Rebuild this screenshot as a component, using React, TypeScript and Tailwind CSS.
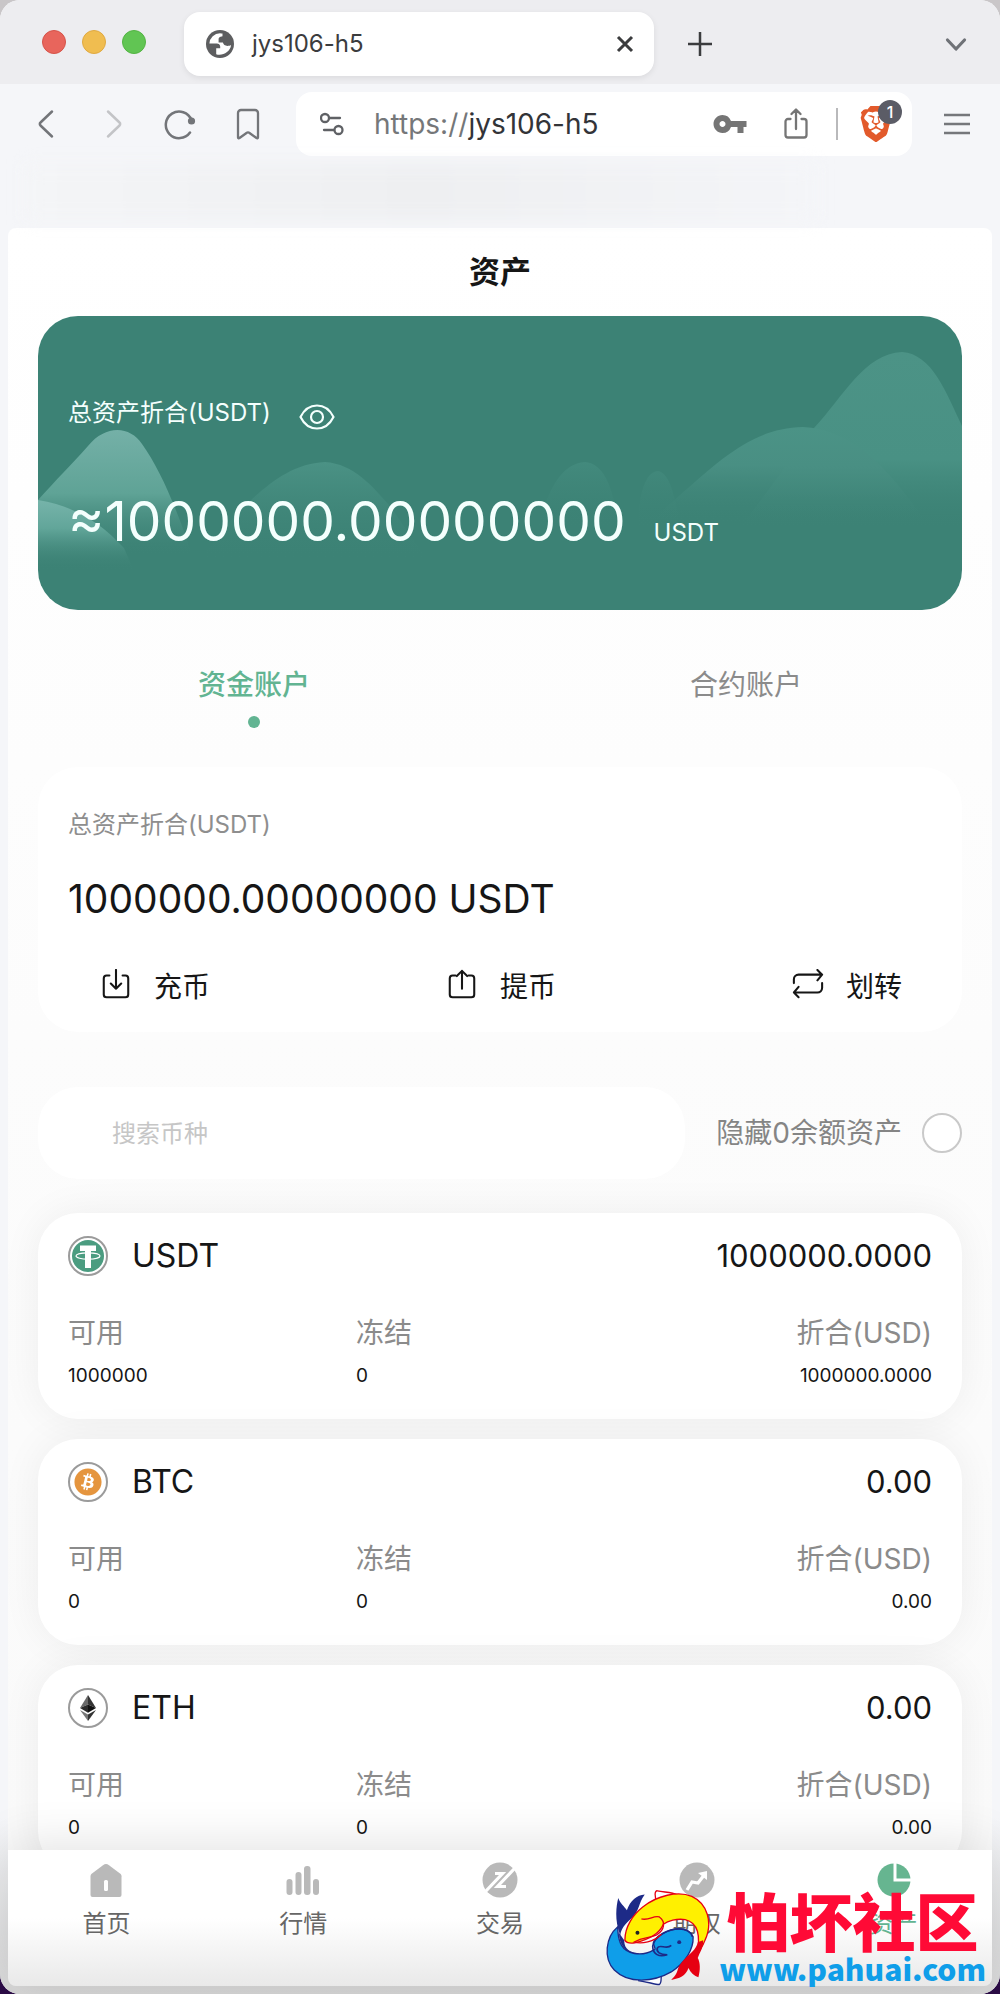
import React, { useState } from "react";
import { SiBrave } from "react-icons/si";
import { FaBitcoin } from "react-icons/fa6";
import { MdVpnKey } from "react-icons/md";

const assets = [
  { symbol: "USDT", total: "1000000.0000", available: "1000000", frozen: "0", usd: "1000000.0000" },
  { symbol: "BTC", total: "0.00", available: "0", frozen: "0", usd: "0.00" },
  { symbol: "ETH", total: "0.00", available: "0", frozen: "0", usd: "0.00" },
];

function GlobeIcon() {
  return (
    <svg viewBox="0 0 28 28" className="size-7 shrink-0">
      <circle cx="14" cy="14" r="14" fill="#5d5e60" />
      <path
        d="M14 3.2A10.9 10.9 0 0 0 3.4 13.4h7.4c1.8 0 3.4 1.2 3.4 3.2v1.6h-4v6c5.900 2 14-2 14.900-9.200-1.300.6-2.200.9-3.600.9-2.600 0-4.200-1.300-4.600-3.300h-4.300V9.200c0-1.300.8-2.200 2-2.500l1.900-.5V3.600A11 11 0 0 0 14 3.200Z"
        fill="#fff"
      />
    </svg>
  );
}

function CoinIcon({ symbol }: { symbol: string }) {
  return (
    <span className="flex size-10 shrink-0 items-center justify-center rounded-full border-2 border-[#9b9b9b] bg-white">
      {symbol === "USDT" && (
        <svg viewBox="0 0 32 32" className="size-8">
          <circle cx="16" cy="16" r="16" fill="#4b9c80" />
          <path d="M8 5.500h16v5.500h-5V28h-6V11H8z" fill="#fff" />
          <ellipse cx="16" cy="16" rx="12" ry="3.200" fill="none" stroke="#fff" strokeWidth="1.200" />
        </svg>
      )}
      {symbol === "BTC" && <FaBitcoin className="size-7 text-[#e5953e]" />}
      {symbol === "ETH" && (
        <svg viewBox="0 0 16 26" className="h-[26px] w-4">
          <path d="M8 0 0 13l8-3.600z" fill="#6a6a6a" />
          <path d="M8 0l8 13-8-3.600z" fill="#333" />
          <path d="M0 13l8-3.600V17.700z" fill="#2b2b2b" />
          <path d="M16 13 8 9.400v8.300z" fill="#111" />
          <path d="M0 15l8 4.600V26z" fill="#777" />
          <path d="M16 15l-8 4.600V26z" fill="#333" />
        </svg>
      )}
    </span>
  );
}

function Mountains() {
  return (
    <svg viewBox="0 0 924 294" preserveAspectRatio="none" className="absolute inset-0 size-full">
      <defs>
        <linearGradient id="peakBright" gradientUnits="userSpaceOnUse" x1="0" y1="115" x2="0" y2="240">
          <stop offset="0" stopColor="#74b0a7" />
          <stop offset="0.500" stopColor="#5fa396" />
          <stop offset="1" stopColor="#3c8275" stopOpacity="0" />
        </linearGradient>
        <linearGradient id="hillBright" gradientUnits="userSpaceOnUse" x1="0" y1="184" x2="0" y2="254">
          <stop offset="0" stopColor="#76b4aa" />
          <stop offset="0.400" stopColor="#62a69a" />
          <stop offset="1" stopColor="#3c8275" stopOpacity="0" />
        </linearGradient>
        <linearGradient id="midHill" gradientUnits="userSpaceOnUse" x1="0" y1="146" x2="0" y2="245">
          <stop offset="0" stopColor="#4b9285" />
          <stop offset="1" stopColor="#3c8275" stopOpacity="0" />
        </linearGradient>
        <linearGradient id="faintHill" gradientUnits="userSpaceOnUse" x1="0" y1="146" x2="0" y2="215">
          <stop offset="0" stopColor="#438a7d" />
          <stop offset="1" stopColor="#3c8275" stopOpacity="0" />
        </linearGradient>
        <linearGradient id="farPeak" gradientUnits="userSpaceOnUse" x1="0" y1="36" x2="0" y2="215">
          <stop offset="0" stopColor="#4c9386" />
          <stop offset="0.600" stopColor="#499184" />
          <stop offset="1" stopColor="#3c8275" stopOpacity="0" />
        </linearGradient>
        <linearGradient id="nearPeak" gradientUnits="userSpaceOnUse" x1="0" y1="111" x2="0" y2="208">
          <stop offset="0" stopColor="#4b9386" />
          <stop offset="0.400" stopColor="#498f83" />
          <stop offset="1" stopColor="#3c8275" stopOpacity="0" />
        </linearGradient>
      </defs>
      <path d="M0 184C18 164 34 148 50 130C68 108 92 110 104 128C124 156 140 196 158 250H0Z" fill="url(#peakBright)" />
      <path d="M0 184C36 190 62 206 86 232L100 264H0Z" fill="url(#hillBright)" />
      <path d="M200 196C226 172 250 148 287 146C316 148 334 170 352 190L390 245H160Z" fill="url(#midHill)" />
      <path d="M498 215C508 185 518 148 547 146C572 148 577 188 582 215Z" fill="url(#faintHill)" />
      <path d="M600 215C600 182 606 156 620 155C634 158 637 186 644 215Z" fill="url(#faintHill)" />
      <path d="M700 215L776 112C806 80 826 38 864 36C894 38 908 76 924 110V215Z" fill="url(#farPeak)" />
      <path d="M610 208L642 179C684 142 716 112 765 111C816 114 848 150 890 208Z" fill="url(#nearPeak)" />
    </svg>
  );
}

function FishLogo() {
  return (
    <svg viewBox="20 105 320 295" className="h-[98px] w-[106px] shrink-0">
      <path d="M178 150C168 130 170 112 178 113C200 118 220 116 240 126" fill="none" stroke="#e60012" strokeWidth="4" />
      <path d="M120 384C150 388 170 396 184 396C194 388 186 374 192 355" fill="#fff" stroke="#1d2a87" strokeWidth="4" />
      <path
        d="M58 222C22 252 14 318 48 352C92 396 168 388 220 358C262 330 288 290 286 252C280 236 262 228 244 228C212 228 176 248 166 270C168 282 176 292 166 292C128 314 84 302 70 278C58 258 60 240 58 222Z"
        fill="#0f9ee9"
        stroke="#1d2a87"
        strokeWidth="4"
      />
      <path
        d="M284 252C280 236 262 228 244 228C212 228 170 248 164 280C164 306 184 314 208 306C186 306 174 298 178 286C184 272 206 292 220 278"
        fill="none"
        stroke="#1d2a87"
        strokeWidth="5"
      />
      <path d="M66 248C48 200 54 160 60 135C66 152 78 160 86 172C96 142 116 126 140 124C120 150 126 172 100 196C82 212 68 228 66 248Z" fill="#1d2a87" />
      <path d="M62 240C62 280 88 308 126 302C96 300 78 290 78 262Z" fill="#1d2a87" />
      <path
        d="M80 262C80 220 106 184 134 162C176 128 240 112 282 130C330 152 346 210 322 262C316 280 306 292 300 302C306 250 304 210 262 200C236 196 210 204 196 214C184 244 144 262 110 270C96 272 84 270 80 262Z"
        fill="#fff000"
        stroke="#e60012"
        strokeWidth="4"
      />
      <path
        d="M130 198C154 204 166 186 184 192C204 206 200 232 176 246C152 258 136 250 108 268C130 274 168 268 190 244"
        fill="none"
        stroke="#e60012"
        strokeWidth="4"
      />
      <path d="M300 268C294 300 250 316 240 350C236 366 228 374 220 382C244 378 264 370 272 346C278 360 290 370 302 374C308 352 308 330 300 316C306 298 318 284 316 262Z" fill="#e60012" />
      <circle cx="118" cy="240" r="6" fill="#222" />
      <circle cx="244" cy="268" r="6" fill="#1d2a87" />
    </svg>
  );
}

const actions = [
  {
    label: "充币",
    icon: (
      <>
        <path d="M9 6H6a3 3 0 0 0-3 3v17a3 3 0 0 0 3 3h20a3 3 0 0 0 3-3V9a3 3 0 0 0-3-3h-3" />
        <path d="M16 0v20M10.500 14.500 16 20l5.500-5.500" />
      </>
    ),
  },
  {
    label: "提币",
    icon: (
      <>
        <path d="M9 6H6a3 3 0 0 0-3 3v17a3 3 0 0 0 3 3h20a3 3 0 0 0 3-3V9a3 3 0 0 0-3-3h-3" />
        <path d="M16 20V1M10.500 6.500 16 1l5.500 5.500" />
      </>
    ),
  },
  {
    label: "划转",
    icon: (
      <>
        <path d="M1 14V10a5 5 0 0 1 5-5h25M26 0l5 5-5 6" />
        <path d="M31 14v5a5 5 0 0 1-5 5H1M6 18l-5 6 5 5" />
      </>
    ),
  },
];

const navItems = [
  {
    label: "首页",
    icon: (
      <>
        <path d="M18 2c1 0 2 .5 3 1.200l11 8.300c1 .8 1.500 1.700 1.500 2.800V33a2 2 0 0 1-2 2h-27a2 2 0 0 1-2-2V14.300c0-1.100.5-2 1.500-2.800L15 3.200C16 2.500 17 2 18 2Z" />
        <rect x="16" y="18" width="4" height="11" rx="1.500" fill="#fff" />
      </>
    ),
  },
  {
    label: "行情",
    icon: (
      <>
        <rect x="1.500" y="17" width="6" height="16" rx="3" />
        <rect x="10.500" y="10" width="6" height="23" rx="3" />
        <rect x="19" y="4" width="6.500" height="29" rx="3" />
        <rect x="28" y="17" width="6" height="16" rx="3" />
      </>
    ),
  },
  {
    label: "交易",
    icon: (
      <>
        <circle cx="18" cy="18" r="17.500" />
        <path d="M3 30 20.500 11.500H13M33 6 15.500 24.500H24" fill="none" stroke="#fff" strokeWidth="3.200" />
      </>
    ),
  },
  {
    label: "期权",
    icon: (
      <>
        <circle cx="18" cy="18" r="17.500" />
        <path d="m8 28 5-8 6 1 7-9" fill="none" stroke="#fff" strokeWidth="3.200" />
        <path d="m19 11 9-2v9z" fill="#fff" />
      </>
    ),
  },
  {
    label: "资产",
    icon: (
      <>
        <circle cx="18" cy="18" r="16.500" />
        <path d="M19 0v18h17" fill="none" stroke="#fff" strokeWidth="3" />
      </>
    ),
  },
];

function BrowserChrome() {
  const [open, setOpen] = useState(true);
  return (
    <header className="shrink-0">
      <div className="flex h-[84px] items-center bg-[#ededf0] pt-1 pr-8 pl-[42px]">
        <div className="flex gap-4 pb-1">
          <span className="size-6 rounded-full border border-[#d65349] bg-[#e8655c]" />
          <span className="size-6 rounded-full border border-[#e0a941] bg-[#f0bd50]" />
          <span className="size-6 rounded-full border border-[#53b443] bg-[#61c553]" />
        </div>
        <div className="ml-[38px] flex h-16 w-[470px] items-center rounded-2xl bg-white pr-5 pl-[22px] shadow-[0_2px_6px_rgba(0,0,0,0.08)]">
          <GlobeIcon />
          <span className="ml-[18px] flex-1 text-2xl text-[#3b3c3e]">jys106-h5</span>
          <button aria-label="Close tab" onClick={() => setOpen(!open)}>
            <svg viewBox="0 0 18 18" className="size-[18px]" stroke="#3b3c3e" strokeWidth="3" fill="none">
              <path d="m2 2 14 14M16 2 2 16" />
            </svg>
          </button>
        </div>
        <button aria-label="New tab" className="ml-[34px]">
          <svg viewBox="0 0 24 24" className="size-6" stroke="#3b3c3e" strokeWidth="2.500" fill="none">
            <path d="M12 0v24M0 12h24" />
          </svg>
        </button>
        <button aria-label="Search tabs" className="ml-auto">
          <svg viewBox="0 0 24 24" className="size-6" stroke="#6f7277" strokeWidth="3.200" fill="none" strokeLinecap="round" strokeLinejoin="round">
            <path d="m3.500 8 8.500 9 8.500-9" />
          </svg>
        </button>
      </div>
      <div className="flex h-20 items-center pr-[30px] pl-8">
        <div className="flex items-center gap-[38px] text-[#737579]">
          <button aria-label="Back">
            <svg viewBox="0 0 28 32" className="h-8 w-7" stroke="currentColor" strokeWidth="2.500" fill="none" strokeLinecap="round" strokeLinejoin="round">
              <path d="M20 3.500 8.500 14.500a2 2 0 0 0 0 3L20 28.500" />
            </svg>
          </button>
          <button aria-label="Forward" className="text-[#c3c4c7]">
            <svg viewBox="0 0 28 32" className="h-8 w-7" stroke="currentColor" strokeWidth="2.500" fill="none" strokeLinecap="round" strokeLinejoin="round">
              <path d="m10 3.500 11.500 11a2 2 0 0 1 0 3L10 28.500" />
            </svg>
          </button>
          <button aria-label="Reload">
            <svg viewBox="0 0 32 32" className="size-8" stroke="currentColor" strokeWidth="2.500" fill="none" strokeLinecap="round">
              <path d="M26 24.500A13.300 13.300 0 1 1 27.500 12" />
              <circle cx="27.500" cy="13" r="3.600" fill="currentColor" stroke="none" />
            </svg>
          </button>
          <button aria-label="Bookmark">
            <svg viewBox="0 0 28 32" className="h-8 w-7" stroke="currentColor" strokeWidth="2.300" fill="none" strokeLinejoin="round">
              <path d="M4 5a3 3 0 0 1 3-3h14a3 3 0 0 1 3 3v24.500c0 1-1 1-1.500.5L15.500 25a2 2 0 0 0-3 0L5.500 30c-.5.500-1.500.5-1.500-.5Z" />
            </svg>
          </button>
        </div>
        <div className="ml-[34px] flex h-16 flex-1 items-center rounded-2xl bg-white pr-[18px] pl-6">
          <svg viewBox="0 0 24 24" className="size-6" stroke="#5f6165" strokeWidth="2.300" fill="none" strokeLinecap="round">
            <circle cx="5" cy="6" r="4" />
            <path d="M9.500 6H20M4 18h10" />
            <circle cx="18.500" cy="18" r="4" />
          </svg>
          <span className="ml-[30px] flex-1 text-[28px] text-[#333438]">
            <span className="text-[#757779]">https://</span>jys106-h5
          </span>
          <button aria-label="Passwords">
            <MdVpnKey className="size-9 text-[#757575]" />
          </button>
          <button aria-label="Share" className="ml-9">
            <svg viewBox="0 0 24 32" className="h-8 w-6" stroke="#757575" strokeWidth="2.300" fill="none" strokeLinecap="round" strokeLinejoin="round">
              <path d="M6.500 11H4a2.500 2.500 0 0 0-2.500 2.500V27A2.500 2.500 0 0 0 4 29.500h16a2.500 2.500 0 0 0 2.500-2.500V13.500A2.500 2.500 0 0 0 20 11h-2.500M12 21V2M7.500 6 12 1.500 16.500 6" />
            </svg>
          </button>
          <span className="ml-7 h-8 w-0.5 bg-[#b9b9bb]" />
          <button aria-label="Brave Shields" className="relative ml-5">
            <SiBrave className="size-9 text-[#e25a2b]" />
            <span className="absolute -top-1.5 left-5 flex size-6 items-center justify-center rounded-full bg-[#5b5c66] text-base font-medium text-white">
              1
            </span>
          </button>
        </div>
        <button aria-label="Menu" className="ml-8">
          <svg viewBox="0 0 26 22" className="h-[22px] w-[26px]" stroke="#75777b" strokeWidth="2.300">
            <path d="M0 2h26M0 11h26M0 20h26" />
          </svg>
        </button>
      </div>
      <div className="h-16 px-6">
        <div className="h-14 w-5/6 bg-linear-to-r from-[#f4f5f7] via-[#eeeff1] to-[#f4f5f8] blur-sm" />
      </div>
    </header>
  );
}

export default function App() {
  const [account, setAccount] = useState(0);
  const [visible, setVisible] = useState(true);
  return (
    <div className="h-screen bg-linear-to-b from-[#c9c6c8] from-50% to-[#2a0b45] to-50%">
      <div className="relative flex h-full flex-col overflow-hidden rounded-[20px] bg-[#f5f6f9] font-['Inter','Noto_Sans_CJK_SC',sans-serif] text-[#161616]">
        <BrowserChrome />
        <div className="flex min-h-0 flex-1 flex-col bg-linear-to-b from-transparent from-90% to-[#d6d6d6] px-2 pb-2">
          <main className="min-h-0 flex-1 overflow-hidden rounded-t-lg bg-linear-to-b from-white via-[#fcfcfc] to-[#fafafa] px-[30px]">
            <h1 className="flex h-[88px] items-center justify-center text-[31px] font-bold">资产</h1>

            <section className="relative flex h-[294px] flex-col overflow-hidden rounded-[40px] bg-[#3c8275] px-[30px] pt-[77px] text-[#f4fffd]">
              <Mountains />
              <div className="relative flex h-10 items-center gap-7">
                <span className="text-2xl">总资产折合(USDT)</span>
                <button aria-label="显示或隐藏资产" className="mt-2" onClick={() => setVisible(!visible)}>
                  <svg viewBox="0 0 36 26" className="h-[26px] w-9" stroke="currentColor" strokeWidth="2.200" fill="none" strokeLinejoin="round">
                    <path d="M1.500 13C5 6 11 1.500 18 1.500S31 6 34.500 13C31 20 25 24.500 18 24.500S5 20 1.500 13Z" />
                    <circle cx="18" cy="13" r="6" />
                  </svg>
                </button>
              </div>
              <div className="relative mt-12 flex items-baseline gap-7">
                <span className="text-[55px] leading-[80px]">≈{visible ? "1000000.00000000" : "****"}</span>
                <span className="text-2xl">USDT</span>
              </div>
            </section>

            <div role="tablist" className="-mx-[30px] grid h-[157px] grid-cols-2 pt-[54px] text-[28px]">
              {["资金账户", "合约账户"].map((name, i) => (
                <button
                  key={name}
                  role="tab"
                  aria-selected={account === i}
                  onClick={() => setAccount(i)}
                  className="flex flex-col items-center gap-2.5 self-start leading-[42px] text-[#8b8b8b] aria-selected:font-medium aria-selected:text-[#62b492]"
                >
                  {name}
                  {account === i && <span className="size-3 rounded-full bg-[#62b492]" />}
                </button>
              ))}
            </div>

            <section className="h-[265px] rounded-[40px] bg-white px-[30px] pt-10">
              <p className="text-2xl leading-9 text-[#8e8e8e]">总资产折合(USDT)</p>
              <p className="mt-[31px] text-[39px] leading-[50px]">1000000.00000000 USDT</p>
              <div className="mt-[42px] flex justify-between pr-[30px] pl-8">
                {actions.map((a) => (
                  <button key={a.label} className="flex items-center gap-[22px] text-[28px] leading-[42px]">
                    <svg viewBox="-1 -1 34 34" className="-mt-1 size-8" stroke="currentColor" strokeWidth="2.200" fill="none" strokeLinecap="round" strokeLinejoin="round">
                      {a.icon}
                    </svg>
                    {a.label}
                  </button>
                ))}
              </div>
            </section>

            <div className="mt-[55px] flex items-center justify-between">
              <input
                type="text"
                aria-label="搜索币种"
                placeholder="搜索币种"
                className="h-[92px] w-[70%] min-w-0 rounded-[40px] bg-white px-[74px] text-2xl outline-none placeholder:text-[#c6c6c6]"
              />
              <label className="flex shrink-0 items-center gap-5 text-[28px] text-[#858585]">
                隐藏0余额资产
                <input type="checkbox" className="size-10 appearance-none rounded-full border-2 border-[#c9c9c9] bg-white checked:bg-[#62b492]" />
              </label>
            </div>

            <div className="mt-[34px] flex flex-col gap-5">
              {assets.map((a) => (
                <article key={a.symbol} className="h-[206px] rounded-[40px] bg-white px-[30px] pt-[23px] shadow-[0_0_40px_rgba(0,0,0,0.06)]">
                  <div className="flex h-10 items-center text-[31px]">
                    <CoinIcon symbol={a.symbol} />
                    <h2 className="ml-6 text-[32px]">{a.symbol}</h2>
                    <span className="ml-auto">{a.total}</span>
                  </div>
                  <dl className="mt-9 grid grid-cols-3 text-[19px] leading-7">
                    <div>
                      <dt className="text-[28px] leading-[42px] text-[#8b8b8b]">可用</dt>
                      <dd className="mt-2">{a.available}</dd>
                    </div>
                    <div>
                      <dt className="text-[28px] leading-[42px] text-[#8b8b8b]">冻结</dt>
                      <dd className="mt-2">{a.frozen}</dd>
                    </div>
                    <div className="text-right">
                      <dt className="text-[28px] leading-[42px] text-[#8b8b8b]">折合(USD)</dt>
                      <dd className="mt-2">{a.usd}</dd>
                    </div>
                  </dl>
                </article>
              ))}
            </div>
          </main>

          <nav className="relative grid h-[136px] shrink-0 grid-cols-5 rounded-b-lg bg-linear-to-b from-white from-50% to-[#e9e9e9] shadow-[0_-4px_50px_rgba(0,0,0,0.12)]">
            {navItems.map((item, i) => (
              <a
                key={item.label}
                href="#"
                aria-current={i === 4 ? "page" : undefined}
                className="group flex flex-col items-center gap-2.5 pt-3 text-2xl text-[#666] aria-[current=page]:text-[#62b492]"
              >
                <svg viewBox="0 0 36 36" className="size-9 fill-[#b9b9b9] group-aria-[current=page]:fill-[#66b590]">
                  {item.icon}
                </svg>
                {item.label}
              </a>
            ))}
          </nav>
        </div>

        <div className="pointer-events-none absolute right-3.5 bottom-2 flex items-center gap-2">
          <FishLogo />
          <div className="flex flex-col items-center font-['Noto_Sans_CJK_SC',sans-serif] whitespace-nowrap">
            <span className="text-[63px] leading-[62px] font-black text-[#ff0a36]">怕坏社区</span>
            <span className="text-[30px] leading-[36px] font-black text-[#0f9ee9]">www.pahuai.com</span>
          </div>
        </div>
      </div>
    </div>
  );
}
